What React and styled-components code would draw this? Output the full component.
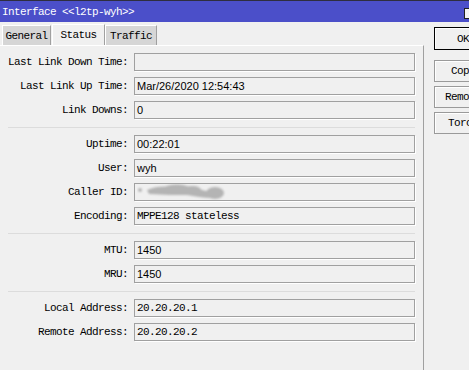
import React from 'react';
import styled, { createGlobalStyle } from 'styled-components';

const GlobalStyle = createGlobalStyle`
  html, body {
    margin: 0;
    padding: 0;
    background: #f0f0f0;
    overflow: hidden;
  }
  body {
    width: 469px;
    height: 370px;
  }
`;

const mono = `
  font-family: "Liberation Mono", "DejaVu Sans Mono", monospace;
  font-size: 11px;
  letter-spacing: -0.6px;
`;

const Window = styled.div`
  width: 469px;
  height: 370px;
  display: flex;
  flex-direction: column;
  background: #f0f0f0;
  overflow: hidden;
`;

const TitleBar = styled.div`
  height: 21px;
  flex: none;
  border-top: 1px solid #2e2e40;
  background: #4b4fc9;
  display: flex;
  align-items: center;
  justify-content: space-between;
  padding-left: 2px;
  color: #fff;
  ${mono}
`;

const MaxBox = styled.div`
  width: 12px;
  height: 9px;
  margin-right: -9px;
  margin-top: 3px;
  border: 1px solid #222;
  background: #f4f4f4;
`;

const Body = styled.div`
  flex: 1;
  display: flex;
  min-height: 0;
`;

const Main = styled.div`
  width: 424px;
  flex: none;
  display: flex;
  flex-direction: column;
`;

const TabBar = styled.div`
  height: 23px;
  flex: none;
  display: flex;
  align-items: flex-end;
  padding-left: 2px;
`;

const Tab = styled.div`
  box-sizing: border-box;
  width: ${({ w }) => w}px;
  height: ${({ active }) => (active ? 21 : 20)}px;
  display: flex;
  align-items: center;
  justify-content: center;
  background: ${({ active }) => (active ? '#f0f0f0' : '#d6d6d6')};
  border-top: 1px solid #fff;
  border-left: 1px solid #fff;
  border-right: 1px solid #a0a0a0;
  color: #000;
  margin-left: ${({ active }) => (active ? 1 : 0)}px;
  ${mono}
`;

const Panel = styled.div`
  flex: 1;
  border-top: 1px solid #fff;
  border-right: 1px solid #a0a0a0;
  padding: 7px 8px 0 8px;
  display: flex;
  flex-direction: column;
`;

const Group = styled.div`
  display: flex;
  flex-direction: column;
  gap: 6px;
`;

const Separator = styled.div`
  height: 1px;
  background: #dcdcdc;
  margin: 8px 0 7px;
`;

const Row = styled.div`
  display: flex;
  align-items: center;
  height: 18px;
`;

const Label = styled.div`
  width: 120px;
  padding-right: 6px;
  text-align: right;
  white-space: nowrap;
  color: #000;
  ${mono}
`;

const Field = styled.div`
  flex: 1;
  box-sizing: border-box;
  height: 18px;
  border: 1px solid #a0a0a0;
  box-shadow: 1px 1px 0 #fff;
  padding-left: 2px;
  display: flex;
  align-items: center;
  white-space: nowrap;
  overflow: hidden;
  color: #000;
  ${({ mono: m }) =>
    m
      ? mono
      : `
    font-family: "Liberation Sans", Arial, sans-serif;
    font-size: 11px;
  `}
`;

const Side = styled.div`
  flex: 1;
  padding: 5px 0 0 10px;
  display: flex;
  flex-direction: column;
  gap: 4px;
`;

const Button = styled.div`
  box-sizing: border-box;
  width: 58px;
  flex: none;
  height: ${({ primary }) => (primary ? 23 : 22)}px;
  margin-bottom: ${({ primary }) => (primary ? 6 : 0)}px;
  display: flex;
  align-items: center;
  justify-content: center;
  background: #f0f0f0;
  border: 1px solid ${({ primary }) => (primary ? '#000' : '#9a9a9a')};
  box-shadow: inset 1px 1px 0 #fff;
  color: #000;
  ${mono}
`;

// smeared-out caller id, as in the screenshot
function Smudge() {
  return (
    <svg width="90" height="16" viewBox="0 0 90 16">
      <defs>
        <filter id="smudge" x="-20%" y="-50%" width="140%" height="200%">
          <feGaussianBlur stdDeviation="0.9" />
        </filter>
      </defs>
      <g fill="#b4b4b4" filter="url(#smudge)">
        <ellipse cx="3" cy="6" rx="2" ry="2" />
        <path d="M10 6 C18 2 28 2 38 3 C46 1 54 2 62 5 C68 7 72 8 76 7 L76 14 C66 14 58 12 50 11 C40 11 26 11 12 10 Z" />
        <ellipse cx="40" cy="4" rx="12" ry="3.5" />
        <ellipse cx="56" cy="6" rx="8" ry="4" />
        <ellipse cx="78" cy="9" rx="9" ry="6" />
      </g>
    </svg>
  );
}

const groups = [
  [
    { label: 'Last Link Down Time:', value: '' },
    { label: 'Last Link Up Time:', value: 'Mar/26/2020 12:54:43' },
    { label: 'Link Downs:', value: '0' },
  ],
  [
    { label: 'Uptime:', value: '00:22:01' },
    { label: 'User:', value: 'wyh' },
    { label: 'Caller ID:', hidden: true },
    { label: 'Encoding:', value: 'MPPE128 stateless', mono: true },
  ],
  [
    { label: 'MTU:', value: '1450' },
    { label: 'MRU:', value: '1450' },
  ],
  [
    { label: 'Local Address:', value: '20.20.20.1', mono: true },
    { label: 'Remote Address:', value: '20.20.20.2', mono: true },
  ],
];

export default function App() {
  return (
    <Window>
      <GlobalStyle />
      <TitleBar>
        <span>Interface &lt;&lt;l2tp-wyh&gt;&gt;</span>
        <MaxBox />
      </TitleBar>
      <Body>
        <Main>
          <TabBar>
            <Tab w={49}>General</Tab>
            <Tab w={53} active>
              Status
            </Tab>
            <Tab w={52}>Traffic</Tab>
          </TabBar>
          <Panel>
            {groups.map((rows, i) => (
              <React.Fragment key={i}>
                {i > 0 && <Separator />}
                <Group>
                  {rows.map((r) => (
                    <Row key={r.label}>
                      <Label>{r.label}</Label>
                      <Field mono={r.mono}>{r.hidden ? <Smudge /> : r.value}</Field>
                    </Row>
                  ))}
                </Group>
              </React.Fragment>
            ))}
          </Panel>
        </Main>
        <Side>
          <Button primary>OK</Button>
          <Button>Copy</Button>
          <Button>Remove</Button>
          <Button>Torch</Button>
        </Side>
      </Body>
    </Window>
  );
}
